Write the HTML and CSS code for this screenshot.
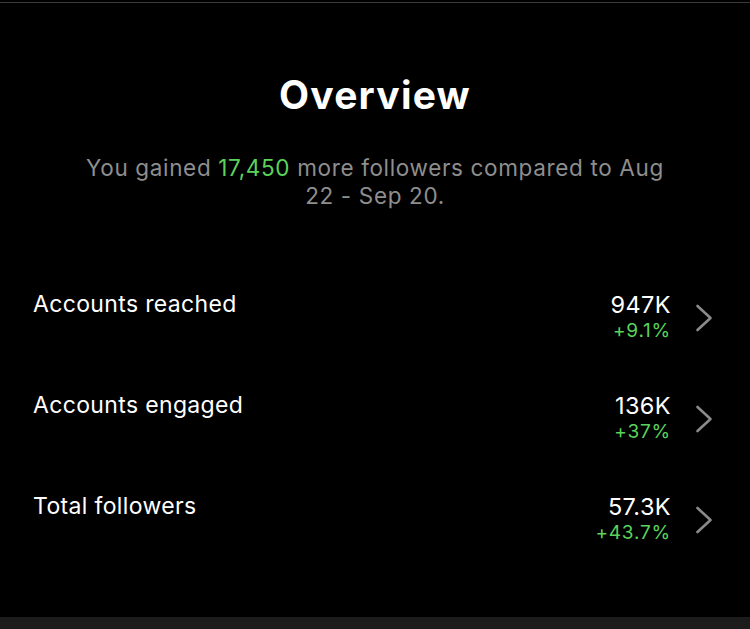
FILE: index.html
```html
<!DOCTYPE html>
<html>
<head>
<meta charset="utf-8">
<link rel="stylesheet" href="styles.css">
</head>
<body>
<div class="topline"></div>
<main class="overview">
  <h1 class="title">Overview</h1>
  <p class="summary">You gained <span class="green">17,450</span> more followers compared to Aug 22 - Sep 20.</p>
  <ul class="rows">
    <li class="row">
      <span class="label">Accounts reached</span>
      <div class="values"><span class="value">947K</span><span class="delta">+9.1%</span></div>
      <svg class="chev" viewBox="0 0 18 28" width="18" height="28"><path d="M2.5 2 L15.5 14 L2.5 26" fill="none" stroke="#8a8a8a" stroke-width="2.6" stroke-linecap="round" stroke-linejoin="round"/></svg>
    </li>
    <li class="row">
      <span class="label">Accounts engaged</span>
      <div class="values"><span class="value">136K</span><span class="delta">+37%</span></div>
      <svg class="chev" viewBox="0 0 18 28" width="18" height="28"><path d="M2.5 2 L15.5 14 L2.5 26" fill="none" stroke="#8a8a8a" stroke-width="2.6" stroke-linecap="round" stroke-linejoin="round"/></svg>
    </li>
    <li class="row">
      <span class="label">Total followers</span>
      <div class="values"><span class="value">57.3K</span><span class="delta">+43.7%</span></div>
      <svg class="chev" viewBox="0 0 18 28" width="18" height="28"><path d="M2.5 2 L15.5 14 L2.5 26" fill="none" stroke="#8a8a8a" stroke-width="2.6" stroke-linecap="round" stroke-linejoin="round"/></svg>
    </li>
  </ul>
</main>
<div class="bottombar"></div>
</body>
</html>
```
FILE: styles.css
```css
* { box-sizing: border-box; }
html, body {
  margin: 0;
  padding: 0;
  background: #000;
  height: 629px;
  overflow: hidden;
}
body {
  display: flex;
  flex-direction: column;
  font-family: "Inter", "Liberation Sans", sans-serif;
  color: #fff;
}
.topline {
  margin-top: 2px;
  height: 1px;
  background: #3a3a3a;
}
.overview {
  flex: 1;
  display: flex;
  flex-direction: column;
}
.title {
  margin: 67px 0 0;
  text-align: center;
  font-size: 39px;
  line-height: 50px;
  font-weight: 700;
  letter-spacing: 1.2px;
}
.summary {
  margin: 34px auto 0;
  width: 590px;
  text-align: center;
  font-size: 22.5px;
  line-height: 28px;
  letter-spacing: 0.65px;
  color: #8e8e8e;
}
.green { color: #5bd35b; }
.rows {
  list-style: none;
  margin: 73px 0 0;
  padding: 0 37px 0 33px;
  display: flex;
  flex-direction: column;
  gap: 47px;
}
.row {
  display: flex;
  align-items: flex-start;
  height: 54px;
}
.label {
  flex: 1;
  font-size: 23px;
  line-height: 28px;
  letter-spacing: 0.35px;
  margin-top: 7px;
}
.values {
  display: flex;
  flex-direction: column;
  align-items: flex-end;
  margin: 8px 24px 0 0;
}
.value {
  font-size: 23.5px;
  line-height: 27px;
  letter-spacing: 0.4px;
}
.delta {
  font-size: 19px;
  line-height: 25px;
  letter-spacing: 0.8px;
  color: #5bd35b;
}
.chev {
  display: block;
  margin-top: 21px;
}
.bottombar {
  height: 12px;
  background: #1c1c1c;
}
```
